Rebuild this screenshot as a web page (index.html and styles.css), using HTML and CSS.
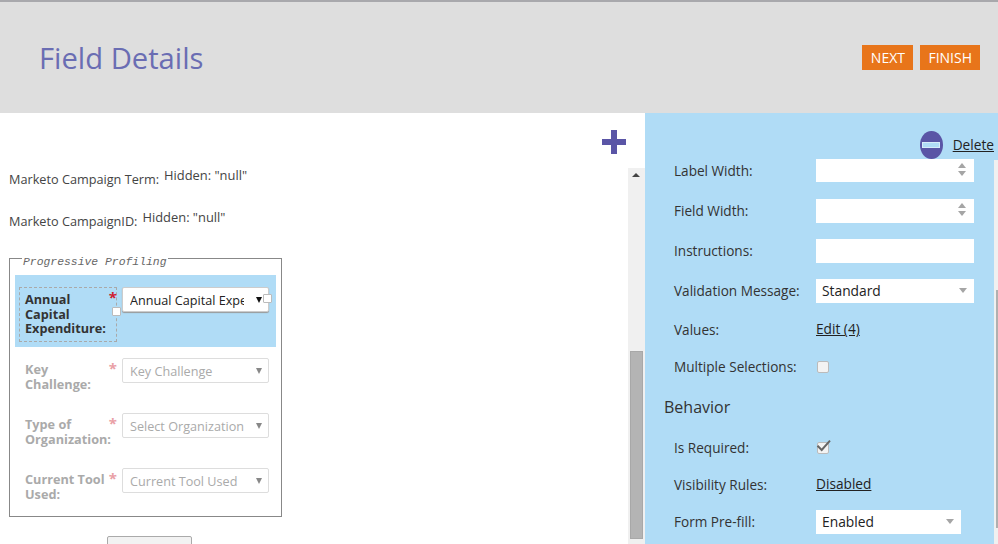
FILE: index.html
```html
<!DOCTYPE html>
<html lang="en">
<head>
<meta charset="utf-8">
<title>Field Details</title>
<link rel="stylesheet" href="styles.css">
</head>
<body>
<header class="top">
  <h1 class="title">Field Details</h1>
  <div class="actions">
    <button class="btn">NEXT</button>
    <button class="btn">FINISH</button>
  </div>
</header>
<main class="main">
  <section class="canvas">
    <div class="canvas-body">
      <div class="plus-row">
        <svg class="plus" width="24" height="24" viewBox="0 0 24 24"><path d="M9 0h6v9h9v6h-9v9H9v-9H0V9h9z"/></svg>
      </div>
      <div class="hidden-field hf-term"><span class="hf-label">Marketo Campaign Term:</span><span class="hf-value">Hidden: "null"</span></div>
      <div class="hidden-field hf-id"><span class="hf-label">Marketo CampaignID:</span><span class="hf-value">Hidden: "null"</span></div>
      <fieldset class="group">
        <legend class="legend">Progressive Profiling</legend>
        <div class="frow active">
          <div class="flabel">Annual Capital Expenditure:<span class="star">*</span><span class="handle handle-label"></span></div>
          <div class="fselect"><span class="fselect-text">Annual Capital Expenditure</span><span class="arrow"></span><span class="handle handle-select"></span></div>
        </div>
        <div class="frow">
          <div class="flabel">Key Challenge:<span class="star">*</span></div>
          <div class="fselect"><span class="fselect-text">Key Challenge</span><span class="arrow"></span></div>
        </div>
        <div class="frow">
          <div class="flabel">Type of Organization:<span class="star">*</span></div>
          <div class="fselect"><span class="fselect-text">Select Organization</span><span class="arrow"></span></div>
        </div>
        <div class="frow">
          <div class="flabel">Current Tool Used:<span class="star">*</span></div>
          <div class="fselect"><span class="fselect-text">Current Tool Used</span><span class="arrow"></span></div>
        </div>
      </fieldset>
      <div class="submit-row"><button class="submit">Submit</button></div>
    </div>
    <div class="vbar">
      <span class="vbar-up"></span>
      <span class="vbar-thumb"></span>
    </div>
  </section>
  <aside class="panel">
    <div class="panel-body">
      <div class="delete-row">
        <span class="del-icon"><span class="del-bar"></span></span>
        <a class="link del-link">Delete</a>
      </div>
      <div class="props">
        <div class="plabel">Label Width:</div>
        <div class="input input-a"><span class="spin"></span></div>
        <div class="plabel">Field Width:</div>
        <div class="input"><span class="spin"></span></div>
        <div class="plabel">Instructions:</div>
        <div class="input"></div>
        <div class="plabel">Validation Message:</div>
        <div class="input pselect">Standard<span class="caret"></span></div>
        <div class="plabel">Values:</div>
        <div class="pvalue"><a class="link">Edit (4)</a></div>
        <div class="plabel">Multiple Selections:</div>
        <div class="pvalue"><span class="check"></span></div>
        <h2 class="section">Behavior</h2>
        <div class="plabel">Is Required:</div>
        <div class="pvalue"><span class="check"><svg width="13" height="12" viewBox="0 0 13 12"><path d="M0.5 3.7L4.7 8 13-1.3" fill="none" stroke="#666" stroke-width="2"/></svg></span></div>
        <div class="plabel">Visibility Rules:</div>
        <div class="pvalue"><a class="link">Disabled</a></div>
        <div class="plabel">Form Pre-fill:</div>
        <div class="input pselect short">Enabled<span class="caret"></span></div>
      </div>
    </div>
    <div class="pbar"><span class="pbar-thumb"></span></div>
  </aside>
</main>
</body>
</html>
```
FILE: styles.css
```css
* { box-sizing: border-box; }
html, body { margin: 0; height: 544px; overflow: hidden; background: #fff; }
body {
  display: flex;
  flex-direction: column;
  font-family: "Open Sans", sans-serif;
  font-size: 13px;
  color: #333;
}
.top {
  flex: none;
  height: 113px;
  border-top: 2px solid #a8a8ac;
  background: #dedede;
  display: flex;
  align-items: flex-start;
  justify-content: space-between;
  padding: 0 18px 0 39px;
}
.title {
  margin: 35px 0 0;
  font-size: 29.2px;
  line-height: 42px;
  font-weight: 400;
  color: #6a6db3;
}
.actions { display: flex; gap: 7px; margin-top: 43px; }
.btn {
  min-width: 51px;
  height: 25px;
  padding: 0 8px;
  border: 0;
  background: #e8751a;
  color: #fff;
  font: 400 14px/25px "Open Sans", sans-serif;
}
.main { flex: 1; display: flex; min-height: 0; }

.canvas { width: 645px; display: flex; }
.canvas-body { width: 628px; padding-left: 9px; }
.plus-row { height: 40px; padding: 17px 0 0 593px; }
.plus { display: block; fill: #5a55a6; }
.hidden-field { display: flex; height: 42px; }
.hf-term { margin-top: 8px; }
.hf-label { padding-top: 9px; font-size: 12.7px; color: #444; }
.hf-value { padding: 5px 0 0 5px; font-size: 12.9px; color: #444; }
.group {
  width: 273px;
  height: 269px;
  margin: 3px 0 0;
  padding: 7px 5px 0;
  border: 1px solid #888;
  min-width: 0;
}
.legend {
  margin-left: 7px;
  padding: 8px 1px 0;
  height: 20px;
  font: italic 11.4px/12px "Liberation Mono", monospace;
  color: #666;
}
.frow {
  position: relative;
  display: flex;
  height: 55px;
  padding: 11px 0 0 4px;
  color: #aaa;
}
.frow.active { height: 72px; padding-top: 12px; background: #b0dcf6; color: #333; }
.flabel {
  position: relative;
  align-self: flex-start;
  width: 98px;
  padding: 3px 5px;
  border: 1px dashed transparent;
  font-size: 12.7px;
  font-weight: 700;
  line-height: 15px;
}
.active .flabel { height: 55px; padding-top: 4px; line-height: 14.7px; border-color: #a9a9a9; }
.star {
  position: absolute;
  right: -1px;
  top: -1px;
  font: 700 15px/20px "Open Sans", sans-serif;
  color: #e9a0a6;
}
.active .star { color: #cf2030; }
.fselect {
  position: relative;
  display: flex;
  width: 147px;
  height: 25px;
  margin-left: 5px;
  padding-left: 7px;
  background: #fff;
  border: 1px solid #ddd;
  border-radius: 2px;
  font-size: 12.65px;
  line-height: 24px;
  color: #aaa;
}
.active .fselect { border-color: #ccc; color: #222; box-shadow: 0 1px 1px #999; }
.fselect-text { width: 114px; overflow: hidden; white-space: nowrap; }
.arrow {
  position: absolute;
  right: 6px;
  top: 9px;
  border: 3.5px solid transparent;
  border-top: 6px solid #888;
  border-bottom: 0;
}
.active .arrow { border-top-color: #111; }
.handle {
  position: absolute;
  width: 9px;
  height: 9px;
  background: #fff;
  border: 1px solid #bbb;
  border-radius: 1px;
}
.handle-label { right: -5px; top: 19px; }
.handle-select { right: -4px; top: 6px; }
.submit-row { padding: 19px 0 0 98px; }
.submit {
  width: 85px;
  height: 30px;
  padding: 0 0 4px;
  border: 1px solid #aaa;
  border-radius: 2px;
  background: #f2f2f2;
  font: 400 13px/24px "Open Sans", sans-serif;
  color: #5a55a6;
}
.vbar {
  position: relative;
  width: 17px;
  margin-top: 55px;
  background: #f0f0f0;
}
.vbar-up {
  position: absolute;
  left: 4px;
  top: 5px;
  border: 4px solid transparent;
  border-bottom: 4px solid #444;
  border-top: 0;
}
.vbar-thumb {
  position: absolute;
  left: 2px;
  top: 183px;
  width: 13px;
  height: 188px;
  background: #b4b4b4;
  border: 1px solid #a8a8a8;
}

.panel { flex: 1; display: flex; background: #b0dcf6; }
.panel-body { width: 349px; }
.delete-row {
  display: flex;
  align-items: center;
  height: 38px;
  padding: 3px 0 0 275px;
  gap: 7px;
}
.del-icon {
  display: flex;
  align-items: center;
  justify-content: center;
  width: 28px;
  height: 28px;
  margin-top: 23px;
  border-radius: 50%;
  background: #5a55a6;
}
.del-bar { width: 18px; height: 6px; background: #b0dcf6; border: 1px solid #d6ecfa; }
.link { color: #222; text-decoration: underline; font-size: 13.7px; }
.del-link { margin: 21px 0 0 3px; }
.props {
  display: grid;
  grid-template-columns: 142px 158px;
  grid-template-rows: 40px 40px 40px 40px 38px 36px 44px 38px 36px 38px;
  padding-left: 29px;
  align-items: center;
}
.plabel { margin-bottom: 2px; font-size: 13.6px; color: #333; }
.input {
  position: relative;
  height: 24px;
  padding-left: 6px;
  background: #fff;
  font-size: 13.8px;
  line-height: 24px;
  color: #222;
}
.input-a { height: 23px; margin-bottom: 1px; }
.short { width: 145px; }
.pvalue { display: flex; align-items: center; margin-bottom: 3px; }
.section {
  grid-column: 1 / -1;
  margin: 0 0 0 -10px;
  font-size: 16px;
  font-weight: 400;
  color: #333;
}
.check {
  display: block;
  width: 12px;
  height: 12px;
  margin: 3px 0 0 1px;
  background: #f3f3f3;
  border: 1px solid #bbb;
  border-radius: 2px;
}
.check svg { display: block; overflow: visible; margin: -1px; }
.spin { position: absolute; right: 7px; top: 4px; width: 9px; height: 13px; }
.spin::before, .spin::after {
  content: "";
  position: absolute;
  left: 0;
  border: 4.5px solid transparent;
}
.spin::before { top: 0; border-top: 0; border-bottom: 5px solid #a5a5a5; }
.spin::after { bottom: 0; border-bottom: 0; border-top: 5px solid #a5a5a5; }
.caret {
  position: absolute;
  right: 7px;
  top: 9px;
  border: 4.5px solid transparent;
  border-top: 5px solid #a5a5a5;
  border-bottom: 0;
}
.pbar {
  position: relative;
  width: 4px;
  margin-top: 47px;
  background: #f0f0f0;
}
.pbar-thumb {
  position: absolute;
  left: 2px;
  top: 130px;
  width: 2px;
  height: 238px;
  background: #b0b0b0;
}
```
